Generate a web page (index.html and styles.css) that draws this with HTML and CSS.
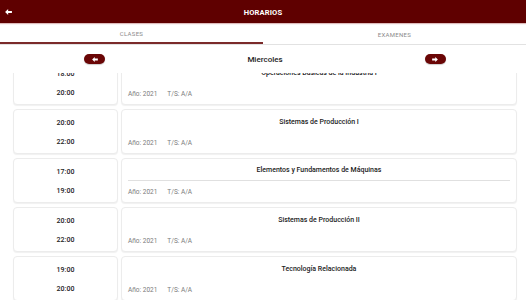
FILE: index.html
```html
<!DOCTYPE html>
<html lang="es">
<head>
<meta charset="utf-8">
<link rel="stylesheet" href="styles.css">
</head>
<body>
<header class="topbar">
  <svg class="back" viewBox="0 0 8 7" width="7" height="6"><path d="M0 3.5 L3.6 0 V2.2 H8 V4.8 H3.6 V7 Z" fill="#fff"/></svg>
  <div class="title">HORARIOS</div>
</header>
<nav class="tabs">
  <div class="tab active">CLASES</div>
  <div class="tab">EXAMENES</div>
</nav>
<div class="daynav">
  <div class="btn"><svg viewBox="0 0 8 7" width="6" height="5"><path d="M0 3.5 L3.6 0 V2.2 H8 V4.8 H3.6 V7 Z" fill="#fff"/></svg></div>
  <div class="day">Miercoles</div>
  <div class="btn"><svg viewBox="0 0 8 7" width="6" height="5"><path d="M8 3.5 L4.4 0 V2.2 H0 V4.8 H4.4 V7 Z" fill="#fff"/></svg></div>
</div>
<main class="list">
  <div class="rows">
    <div class="row">
      <div class="card times"><span>18:00</span><span>20:00</span></div>
      <div class="card info"><div class="subject">Operaciones Básicas de la Industria I</div><div class="meta"><span>Año: 2021</span><span>T/S: A/A</span></div></div>
    </div>
    <div class="row">
      <div class="card times"><span>20:00</span><span>22:00</span></div>
      <div class="card info"><div class="subject">Sistemas de Producción I</div><div class="meta"><span>Año: 2021</span><span>T/S: A/A</span></div></div>
    </div>
    <div class="row">
      <div class="card times"><span>17:00</span><span>19:00</span></div>
      <div class="card info"><div class="subject divided">Elementos y Fundamentos de Máquinas</div><div class="meta"><span>Año: 2021</span><span>T/S: A/A</span></div></div>
    </div>
    <div class="row">
      <div class="card times"><span>20:00</span><span>22:00</span></div>
      <div class="card info"><div class="subject">Sistemas de Producción II</div><div class="meta"><span>Año: 2021</span><span>T/S: A/A</span></div></div>
    </div>
    <div class="row">
      <div class="card times"><span>19:00</span><span>20:00</span></div>
      <div class="card info"><div class="subject">Tecnología Relacionada</div><div class="meta"><span>Año: 2021</span><span>T/S: A/A</span></div></div>
    </div>
  </div>
</main>
</body>
</html>
```
FILE: styles.css
```css
* { box-sizing: border-box; }
html, body { margin: 0; padding: 0; background: #fff; }
body {
  width: 526px; height: 300px; overflow: hidden;
  font-family: Roboto, "Liberation Sans", sans-serif;
  color: #222;
}
.topbar {
  height: 23px;
  background: #5f0000;
  display: flex; align-items: center; justify-content: center;
  position: relative;
  box-shadow: 0 1px 1px rgba(160, 60, 60, 0.35);
}
.back { position: absolute; left: 5px; top: 9px; }
.title { color: #fff; font-weight: 700; font-size: 7.6px; letter-spacing: 0.1px; padding-top: 1px; }
.tabs {
  display: flex; height: 22px;
  border-bottom: 1px solid #e2e2e2;
}
.tab {
  flex: 1; display: flex; align-items: center; justify-content: center;
  font-size: 6px; color: #8a8a8a; letter-spacing: 0.3px;
  padding-top: 1px;
}
.tab.active { border-bottom: 2px solid #7b2a2a; }
.daynav {
  height: 28px;
  display: flex; align-items: center; justify-content: space-between;
  padding: 0 80px 0 84px;
}
.btn {
  width: 21px; height: 10px; border-radius: 5px;
  background: #6a0606;
  display: flex; align-items: center; justify-content: center;
  box-shadow: 0 1px 1px rgba(0,0,0,0.2);
}
.btn svg { display: block; }
.day { font-size: 8px; font-weight: 500; color: #222; }
.list { height: 227px; overflow: hidden; }
.rows {
  margin-top: -13px;
  display: flex; flex-direction: column; gap: 4px;
  padding: 0 9px 0 13px;
}
.row {
  display: grid; grid-template-columns: 105px 1fr; gap: 3px;
  height: 45px;
}
.card {
  background: #fff;
  border: 1px solid #ececec;
  border-radius: 4px;
  box-shadow: 0 1px 1px rgba(0,0,0,0.06);
}
.times {
  display: flex; flex-direction: column; align-items: center;
  padding-top: 8px; gap: 9px;
  font-size: 7px; line-height: 10px; font-weight: 500; color: #222;
}
.info {
  display: flex; flex-direction: column; justify-content: space-between;
  padding: 7px 6px 5px 6px;
}
.subject {
  text-align: center; font-size: 7px; line-height: 10px; font-weight: 500; color: #222;
}
.subject.divided {
  border-bottom: 1px solid #e0e0e0;
  padding-bottom: 5px;
  margin-top: -1px;
}
.meta {
  display: flex; gap: 10px;
  font-size: 6.5px; line-height: 10px; color: #7a7a7a;
}
```
